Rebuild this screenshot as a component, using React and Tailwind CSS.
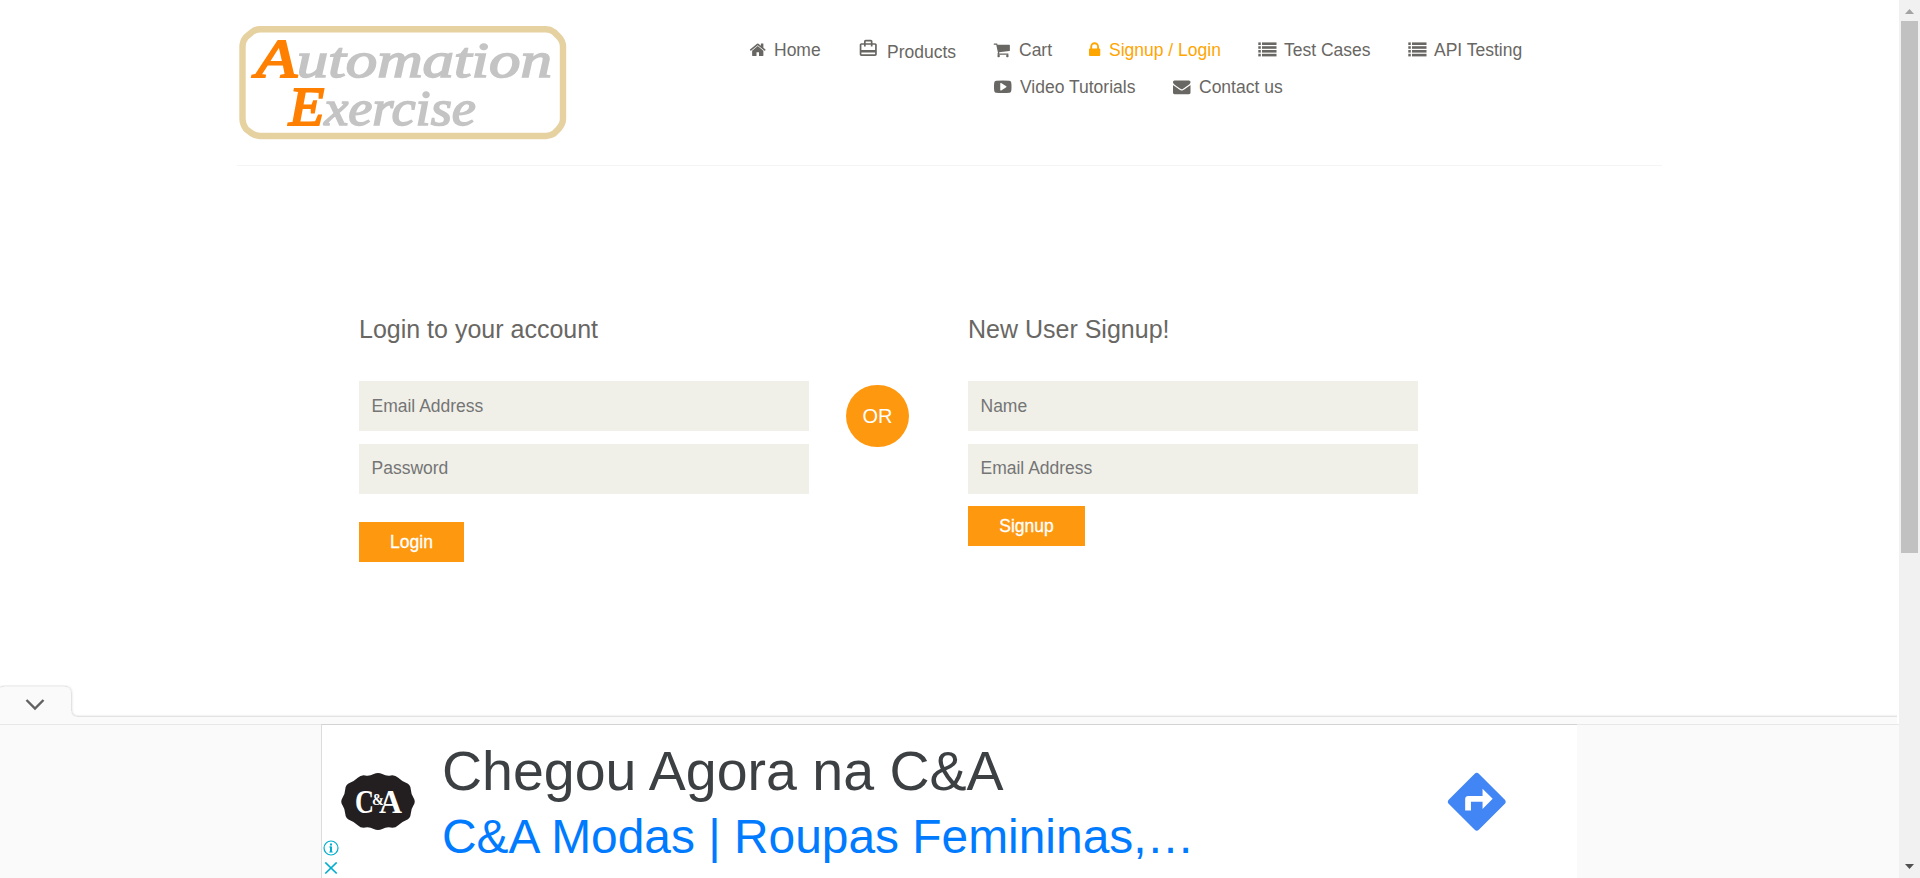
import React from "react";

const HOME = "M1472 992v480q0 26-19 45t-45 19h-384v-384h-256v384h-384q-26 0-45-19t-19-45v-480q0-1 .5-3t.5-3l575-474 575 474q1 2 1 6zm223-69l-62 74q-8 9-21 11h-3q-13 0-21-7l-692-577-692 577q-12 8-24 7-13-2-21-11l-62-74q-8-10-7-23.5t11-21.5l719-599q32-26 76-26t76 26l244 204v-195q0-14 9-23t23-9h192q14 0 23 9t9 23v408l219 182q10 8 11 21.5t-7 23.5z";
const CART = "M704 1536q0 52-38 90t-90 38-90-38-38-90 38-90 90-38 90 38 38 90zm896 0q0 52-38 90t-90 38-90-38-38-90 38-90 90-38 90 38 38 90zm128-1088v512q0 24-16.5 42.5t-40.5 21.5l-1044 122q13 60 13 70 0 16-24 64h920q26 0 45 19t19 45-19 45-45 19h-1024q-26 0-45-19t-19-45q0-11 8-31.5t16-36 21.5-40 15.5-29.5l-177-823h-204q-26 0-45-19t-19-45 19-45 45-19h256q16 0 28.5 6.5t19.5 15.5 13 24.5 8 26 5.5 29.5 4.5 26h1201q26 0 45 19t19 45z";
const LOCK = "M640 768h512v-192q0-106-75-181t-181-75-181 75-75 181v192zm832 96v576q0 40-28 68t-68 28h-960q-40 0-68-28t-28-68v-576q0-40 28-68t68-28h32v-192q0-184 132-316t316-132 316 132 132 316v192h32q40 0 68 28t28 68z";
const VIDEO = "M1280 896q0-37-30-54l-512-320q-31-20-65-2-33 18-33 56v640q0 38 33 56 16 8 31 8 20 0 34-10l512-320q30-17 30-54zm512 0q0 96-1 150t-8.5 136.5-22.5 147.5q-16 73-69 123t-124 58q-222 25-671 25t-671-25q-71-8-124.5-58t-69.5-123q-14-65-21.5-147.5t-8.5-136.5-1-150 1-150 8.5-136.5 22.5-147.5q16-73 69-123t124-58q222-25 671-25t671 25q71 8 124.5 58t69.5 123q14 65 21.5 147.5t8.5 136.5 1 150z";
const MAIL = "M1792 710v794q0 66-47 113t-113 47h-1472q-66 0-113-47t-47-113v-794q44 49 101 87 362 246 497 345 57 42 92.5 65.5t94.5 48 110 24.5h2q51 0 110-24.5t94.5-48 92.5-65.5q170-123 498-345 57-39 100-87zm0-294q0 79-49 151t-122 123q-376 261-468 325-10 7-42.5 31t-54 38.5-52 32.5-57.5 27-50 9h-2q-23 0-50-9t-57.5-27-52-32.5-54-38.5-42.5-31q-91-64-262-182.5t-205-142.5q-62-42-117-115.5t-55-136.5q0-78 41.5-130t118.5-52h1472q65 0 112.5 47t47.5 113z";

function Glyph({ d, box = "0 0 1792 1792" }) {
  return (
    <svg viewBox={box} className="mb-[2px] h-[17.5px] w-[17.5px] shrink-0 overflow-visible" fill="currentColor">
      <path d={d} />
    </svg>
  );
}

function ListGlyph() {
  return (
    <svg viewBox="0 0 18 18" className="mb-[2px] h-[18px] w-[18px] shrink-0 overflow-visible" fill="currentColor">
      {[1.4, 5.2, 9, 12.8].map((y) => (
        <g key={y}>
          <rect x="0.300" y={y} width="2.500" height="2.600" />
          <rect x="4" y={y} width="14.500" height="2.600" />
        </g>
      ))}
    </svg>
  );
}

function NavItem({ icon, label, width, slot, className = "" }) {
  return (
    <li className={`${width} flex shrink-0 items-center ${className}`}>
      <span className={`${slot} flex shrink-0`}>{icon}</span>
      <a href="#" className="whitespace-nowrap">{label}</a>
    </li>
  );
}

function Field({ placeholder, type = "text", className = "" }) {
  return (
    <input
      type={type}
      placeholder={placeholder}
      className={`block h-[50px] w-[450px] bg-[#f0f0e9] pl-[12.5px] text-[17.5px] text-[#696763] outline-none placeholder:text-[#757575] ${className}`}
    />
  );
}

function Logo() {
  return (
    <svg viewBox="0 0 328 114" className="h-[114px] w-[328px]" aria-label="Automation Exercise">
      <path d="M21 3.2H307Q311 3.2 315 6L320 11Q324 15 324 21V93Q324 98 319.500 103L315 107.500Q311 110 307 110H21Q17 110 13 107.500L7 103Q3.500 98 3.500 93V21Q3.500 15 7 11L13 6Q17 3.200 21 3.200Z" fill="#fff" stroke="#e6d1a1" strokeWidth="6.400" />
      <g fontFamily="'Liberation Serif', serif" fontStyle="italic" strokeWidth="1.600">
        <text x="17" y="51" fontSize="51" textLength="296" lengthAdjust="spacingAndGlyphs" fill="#c4c4c4" stroke="#c4c4c4">
          <tspan fill="#ff8000" stroke="#ff8000" fontSize="54" strokeWidth="2.200">A</tspan>utomation
        </text>
        <text x="50" y="99" fontSize="51" textLength="187" lengthAdjust="spacingAndGlyphs" fill="#c4c4c4" stroke="#c4c4c4">
          <tspan fill="#ff8000" stroke="#ff8000" fontSize="54" strokeWidth="2.200">E</tspan>xercise
        </text>
      </g>
    </svg>
  );
}

function Header() {
  return (
    <header className="mx-auto flex h-[166px] w-[1425px] border-b border-[#f5f5f5]">
      <div className="w-[513px] pt-[26px] pl-[2px]">
        <Logo />
      </div>
      <nav className="flex flex-col pt-[38px] text-[17.5px] leading-[25px] text-[#696763]">
        <ul className="flex h-[25px]">
          <NavItem width="w-[110px]" slot="w-[25px] -ml-px" label="Home" icon={<Glyph d={HOME} />} />
          <NavItem
            width="w-[134px]"
            slot="w-[27px] -ml-[2px] mr-[2px] -mt-[8px]"
            className="pt-[3px]"
            label="Products"
            icon={
              <svg viewBox="0 0 24 24" className="h-[20.500px] w-[20.500px]" fill="currentColor">
                <path d="M20 6h-3V4c0-1.110-.890-2-2-2H9c-1.110 0-2 .890-2 2v2H4c-1.110 0-2 .890-2 2v11c0 1.110.890 2 2 2h16c1.110 0 2-.890 2-2V8c0-1.110-.890-2-2-2zM9 4h6v2H9V4zm11 15H4v-2h16v2zm0-5H4V8h3v2h2V8h6v2h2V8h3v6z" />
              </svg>
            }
          />
          <NavItem width="w-[95px]" slot="w-[26px] -ml-px" label="Cart" icon={<Glyph d={CART} />} />
          <NavItem width="w-[169px]" slot="w-[20px]" className="text-[#ffa500]" label="Signup / Login" icon={<Glyph d={LOCK} box="320 0 1792 1792" />} />
          <NavItem width="w-[150px]" slot="w-[26px]" label="Test Cases" icon={<ListGlyph />} />
          <NavItem width="w-[120px]" slot="w-[26px]" label="API Testing" icon={<ListGlyph />} />
        </ul>
        <ul className="mt-[12px] flex h-[25px] pl-[244px]">
          <NavItem width="w-[179px]" slot="w-[26px]" label="Video Tutorials" icon={<Glyph d={VIDEO} />} />
          <NavItem width="w-[130px]" slot="w-[26px]" label="Contact us" icon={<Glyph d={MAIL} />} />
        </ul>
      </nav>
    </header>
  );
}

function Forms() {
  return (
    <main className="flex pl-[359px] pt-[151px]">
      <form className="w-[450px]">
        <h2 className="mb-[39px] text-[25px] leading-[25px] text-[#696763]">Login to your account</h2>
        <Field placeholder="Email Address" />
        <div className="h-[13px]" />
        <Field placeholder="Password" type="password" className="pb-[2px]" />
        <button type="button" className="mt-[28px] block h-[40px] w-[105px] bg-[#fe980f] text-[17.5px] text-white [-webkit-text-stroke:0.300px_white]">Login</button>
      </form>
      <div className="ml-[37px] mt-[68px] flex h-[62px] w-[63px] items-center justify-center rounded-full bg-[#fe980f] text-[20px] text-white">OR</div>
      <form className="ml-[59px] w-[450px]">
        <h2 className="mb-[39px] text-[25px] leading-[25px] text-[#696763]">New User Signup!</h2>
        <Field placeholder="Name" />
        <div className="h-[13px]" />
        <Field placeholder="Email Address" className="pb-[2px]" />
        <button type="button" className="mt-[12px] block h-[40px] w-[117px] bg-[#fe980f] text-[17.5px] text-white [-webkit-text-stroke:0.300px_white]">Signup</button>
      </form>
    </main>
  );
}

// One quarter of the scalloped outline: tips and valleys alternate from the right tip to the top tip.
const QUARTER = [[38, 0], [33, 7.5], [32.5, 17], [23.500, 20.5], [17, 26.8], [8.500, 25.300]];

function badgePath() {
  const all = [
    ...QUARTER.map(([x, y]) => [x, -y]),
    [0, -29.5],
    ...QUARTER.slice(1).reverse().map(([x, y]) => [-x, -y]),
    ...QUARTER.map(([x, y]) => [-x, y]),
    [0, 29.5],
    ...QUARTER.slice(1).reverse().map(([x, y]) => [x, y]),
  ].map(([x, y]) => [x + 37, y + 28.5]);
  const mid = (a, b) => `${(a[0] + b[0]) / 2} ${(a[1] + b[1]) / 2}`;
  const n = all.length;
  return `M${mid(all[n - 1], all[0])}` + all.map((p, i) => `Q${p[0]} ${p[1]} ${mid(p, all[(i + 1) % n])}`).join("") + "Z";
}

function Badge() {
  return (
    <svg viewBox="0 0 74 57" className="h-[57px] w-[74px] overflow-visible">
      <path d={badgePath()} fill="#231f20" />
      <g fill="#fff" fontFamily="'Liberation Serif', serif" fontWeight="bold">
        <text x="14" y="39.500" fontSize="33" textLength="19" lengthAdjust="spacingAndGlyphs">C</text>
        <text x="38" y="39.500" fontSize="33" textLength="23" lengthAdjust="spacingAndGlyphs">A</text>
        <text x="31" y="32" fontSize="16" textLength="12" lengthAdjust="spacingAndGlyphs" stroke="#231f20" strokeWidth="1.200" paintOrder="stroke">&amp;</text>
      </g>
    </svg>
  );
}

function AdBar() {
  return (
    <section className="flex h-[192px] flex-col">
      <svg viewBox="0 0 1899 38" className="h-[38px] w-[1899px] shrink-0 overflow-visible">
        <defs>
          <filter id="barShadow" filterUnits="userSpaceOnUse" x="-20" y="-10" width="1960" height="60">
            <feDropShadow dx="0" dy="0" stdDeviation="1.800" floodColor="#000" floodOpacity="0.300" />
          </filter>
          <clipPath id="barClip"><rect x="0" y="-1" width="1897" height="39" /></clipPath>
        </defs>
        <g clipPath="url(#barClip)">
          <path d="M-6 45V8Q-1 .700 5 .700H64Q71 .700 71 8V24.500Q71 31 77.500 31H1905V45Z" fill="#fafafa" filter="url(#barShadow)" />
        </g>
        <path d="M26.500 14L35 22.500L43.500 14" fill="none" stroke="#616161" strokeWidth="2.400" />
      </svg>
      <div className="flex h-[154px] bg-[#fafafa]">
        <div className="w-[321px] border-t border-[#e8e8e8]" />
        <div className="flex w-[1256px] border-l border-t border-[#d3d3d3] border-l-[#dcdcdc] bg-white">
          <div className="flex w-[120px] flex-col">
            <div className="flex h-[116px] items-start pl-[19px] pt-[48px]">
              <Badge />
            </div>
            <div className="flex flex-col gap-[6px] pl-px pt-px">
              <svg viewBox="0 0 16 16" className="h-4 w-4" fill="none" stroke="#00aecd">
                <circle cx="8" cy="8" r="7" strokeWidth="1.200" />
                <path d="M8 3.500v2M8 6.500V12" strokeWidth="2" />
                <path d="M6.300 7H8M6.300 12h3.400" strokeWidth="1" />
              </svg>
              <svg viewBox="0 0 16 16" className="h-4 w-4" fill="none" stroke="#00aecd" strokeWidth="1.700">
                <path d="M2.300 .500L13.700 11.500M13.700 .500L2.300 11.500" />
              </svg>
            </div>
          </div>
          <div className="w-[1000px] whitespace-nowrap">
            <div className="pt-[14px] text-[55.500px] leading-[64px] text-[#3c4043]">Chegou Agora na C&amp;A</div>
            <div className="text-[47.900px] leading-[67px] text-[#007bff]">C&amp;A Modas | Roupas Femininas,…</div>
          </div>
          <div className="pt-[42px]">
            <svg viewBox="0 0 24 24" className="h-[69.500px] w-[69.500px]" fill="#4285f4">
              <path d="M21.710 11.290l-9-9c-.390-.390-1.020-.390-1.410 0l-9 9c-.390.390-.390 1.020 0 1.410l9 9c.390.390 1.020.390 1.410 0l9-9c.390-.380.390-1.010 0-1.410zM14 14.500V12h-4v3H8v-4c0-.550.450-1 1-1h5V7.500l3.500 3.500-3.500 3.500z" />
            </svg>
          </div>
        </div>
        <div className="flex-1 border-t border-[#e8e8e8]" />
      </div>
    </section>
  );
}

function Scrollbar() {
  return (
    <div className="flex w-[21px] flex-col items-center bg-[#f1f1f1]">
      <svg viewBox="0 0 21 21" className="h-[21px] w-[21px]" fill="#a3a3a3">
        <path d="M6 14L10.500 9L15 14Z" />
      </svg>
      <div className="h-[532px] w-[17px] bg-[#c1c1c1]" />
      <div className="flex-1" />
      <svg viewBox="0 0 21 21" className="h-[21px] w-[21px]" fill="#505050">
        <path d="M6 7L10.500 12L15 7Z" />
      </svg>
    </div>
  );
}

export default function App() {
  return (
    <div className="flex h-[878px] w-[1920px] overflow-hidden bg-white font-['Liberation_Sans',Arial,sans-serif]">
      <div className="flex w-[1899px] flex-col overflow-hidden">
        <div className="h-[686px]">
          <Header />
          <Forms />
        </div>
        <AdBar />
      </div>
      <Scrollbar />
    </div>
  );
}
